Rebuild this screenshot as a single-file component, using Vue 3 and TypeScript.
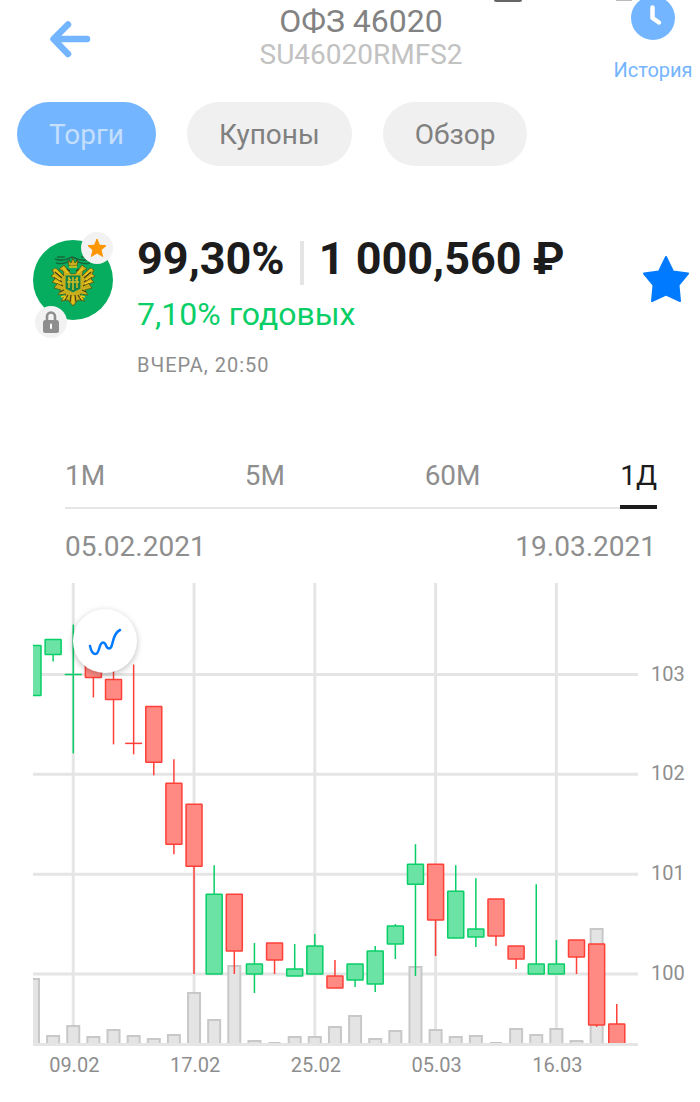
<script setup lang="ts">
import { ref } from 'vue'

interface Candle {
  up: boolean
  top: number
  bottom: number
  high: number
  low: number
  volume: number
}

const sections = ['Торги', 'Купоны', 'Обзор']
const activeSection = ref('Торги')

const ranges = ['1М', '5М', '60М', '1Д']
const activeRange = ref('1Д')

// direction, body top, body bottom, high, low, volume
const rows: [number, number, number, number, number, number][] = [
  [1, 103.29, 102.79, 103.29, 102.79, 65],
  [1, 103.35, 103.2, 103.35, 103.13, 8],
  [1, 103, 103, 103.5, 102.21, 18],
  [0, 103.15, 102.97, 103.15, 102.77, 7],
  [0, 102.95, 102.75, 103.1, 102.3, 14],
  [0, 102.31, 102.31, 103.1, 102.2, 8],
  [0, 102.68, 102.12, 102.68, 101.99, 5],
  [0, 101.91, 101.3, 102.15, 101.2, 9],
  [0, 101.7, 101.08, 101.7, 100, 51],
  [1, 100.8, 100, 101.09, 100, 24],
  [0, 100.8, 100.23, 100.8, 100, 78],
  [1, 100.1, 100, 100.31, 99.81, 3],
  [0, 100.31, 100.14, 100.31, 100, 1],
  [1, 100.05, 99.98, 100.3, 99.98, 7],
  [1, 100.28, 100, 100.4, 100, 7],
  [0, 99.98, 99.86, 100.14, 99.86, 17],
  [1, 100.1, 99.94, 100.1, 99.87, 28],
  [1, 100.23, 99.9, 100.28, 99.82, 5],
  [1, 100.48, 100.3, 100.5, 100.15, 13],
  [1, 101.1, 100.9, 101.3, 99.98, 77],
  [0, 101.1, 100.54, 101.1, 100.18, 14],
  [1, 100.83, 100.36, 101.09, 100.36, 7],
  [1, 100.45, 100.37, 100.96, 100.27, 8],
  [0, 100.75, 100.38, 100.75, 100.28, 1],
  [0, 100.28, 100.15, 100.28, 100.05, 15],
  [1, 100.1, 100, 100.9, 100, 9],
  [1, 100.1, 100, 100.34, 100, 15],
  [0, 100.34, 100.17, 100.34, 100, 3],
  [0, 100.3, 99.49, 100.3, 99.47, 115],
  [0, 99.5, 99.2, 99.7, 99.2, 0],
]
const candles: Candle[] = rows.map(([dir, top, bottom, high, low, volume]) => ({
  up: dir === 1, top, bottom, high, low, volume,
}))

const plot = { left: 33, right: 638, base: 460, step: 20.13 }
const x = (i: number) => plot.left + i * plot.step
const y = (price: number) => 91.5 + (103 - price) * 99.83

const priceTicks = [103, 102, 101, 100]
const dateTicks = [
  { i: 2, label: '09.02' },
  { i: 8, label: '17.02' },
  { i: 14, label: '25.02' },
  { i: 20, label: '05.03' },
  { i: 26, label: '16.03' },
]

function volumePath(i: number, v: number): string {
  const top = plot.base - v + 1
  return `M${x(i) - 6} ${plot.base}V${top}H${x(i) + 6}V${plot.base}`
}
</script>

<template>
  <main class="page">
    <header class="header">
      <span class="notch dark"></span>
      <span class="notch light"></span>
      <button class="back" type="button" aria-label="Назад">
        <svg width="42" height="38" viewBox="0 0 42 38" fill="none" stroke="#74b5ff" stroke-width="6.5" stroke-linecap="round" stroke-linejoin="round">
          <path d="M38 19H5M19 4.500L4.500 19L19 34" />
        </svg>
      </button>
      <div class="heading">
        <h1>ОФЗ 46020</h1>
        <p>SU46020RMFS2</p>
      </div>
      <a class="history" href="#history">
        <svg width="44" height="44" viewBox="0 0 44 44">
          <circle cx="22" cy="22" r="22" fill="#74b5ff" />
          <path d="M21.500 11.500V22L28 26.500" fill="none" stroke="#fff" stroke-width="4.500" stroke-linecap="round" stroke-linejoin="round" />
        </svg>
        <span>История</span>
      </a>
    </header>

    <nav class="sections">
      <button
        v-for="s in sections" :key="s" type="button" class="pill"
        :class="{ active: s === activeSection }" @click="activeSection = s"
      >{{ s }}</button>
    </nav>

    <section class="quote">
      <div class="logo">
        <svg class="emblem" width="80" height="80" viewBox="0 0 80 80">
          <circle cx="40" cy="40" r="40" fill="#07ad5e" />
          <g fill="none" stroke="#17683c" stroke-width="1.600">
            <path d="M22 19Q30 22 39 17Q49 22 58 19M23 23Q32 25 37 20M57 23Q48 25 43 20M24 17L32 17M48 17L56 17" />
          </g>
          <g fill="#c9ae1c" stroke="#4d5a16" stroke-width="0.800">
            <path d="M36 26L35 20L38 23L40 18L42 23L45 20L44 26Z" />
            <path d="M38 34L31 25L26 29L30 31L31 36L23 28L19 30L21 34L18 36L22 39L19 42L24 44L21 48L28 50L25 55L33 54L28 61L35 60L40 66L45 60L52 61L47 54L55 55L52 50L59 48L56 44L61 42L58 39L62 36L59 34L61 30L57 28L49 36L50 31L54 29L49 25L42 34Z" />
          </g>
          <g fill="none" stroke="#463f16" stroke-width="1.200">
            <path d="M22 32L29 38M21 37L29 42M24 43L30 46M58 32L51 38M59 37L51 42M56 43L50 46M34 29L37 31M46 29L43 31M35 55L32 60M38 55L37 62M42 55L43 62M45 55L48 60M27 52L31 50M53 52L49 50" />
          </g>
          <g fill="none" stroke="#f0c818" stroke-width="1.400">
            <path d="M21 29L28 35M20 35L27 40M22 41L28 44M59 29L52 35M60 35L53 40M58 41L52 44M36 27H44M30 28L35 33M50 28L45 33M33 57L30 59M40 56V64M47 57L50 59M28 57L32 56M52 57L48 56" />
          </g>
          <path d="M32 35H48V49L40 53L32 49Z" fill="#128448" stroke="#c8b020" stroke-width="1.200" />
          <path d="M36 37V48M40 37V50M44 37V48M34 42H46M35 38L38 40M42 40L45 38" fill="none" stroke="#d5bd22" stroke-width="1.500" />
        </svg>
        <span class="badge fav">
          <svg width="20" height="20" viewBox="0 0 20 20" fill="#ff9500" stroke="#ff9500" stroke-linejoin="round">
            <path d="M10 1L12.500 7.200L19 7.700L14 12L15.700 18.500L10 15L4.300 18.500L6 12L1 7.700L7.500 7.200Z" />
          </svg>
        </span>
        <span class="badge lock">
          <svg width="16" height="22" viewBox="0 0 16 22">
            <path d="M4 11V5.500A4 4 0 0 1 12 5.500V11" fill="none" stroke="#8e8e8e" stroke-width="2.600" />
            <rect x="0" y="9" width="16" height="13" rx="2.500" fill="#8e8e8e" />
            <rect x="7" y="12.500" width="2" height="5.500" rx="1" fill="#fff" />
          </svg>
        </span>
      </div>
      <div class="figures">
        <div class="price">
          <strong>99,30%</strong>
          <i class="bar"></i>
          <strong>1 000,560 ₽</strong>
        </div>
        <p class="yield">7,10% годовых</p>
        <p class="time">ВЧЕРА, 20:50</p>
      </div>
      <button class="star" type="button" aria-label="В избранное">
        <svg width="48" height="48" viewBox="0 0 48 48" fill="#007aff" stroke="#007aff" stroke-width="2" stroke-linejoin="round">
          <path d="M24 2L31 16.500L46 18.500L36.500 30L38 46L24 39.500L10 46L11.500 30L2 18.500L17 16.500Z" />
        </svg>
      </button>
    </section>

    <section class="period">
      <div class="ranges">
        <button
          v-for="r in ranges" :key="r" type="button"
          :class="{ active: r === activeRange }" @click="activeRange = r"
        >{{ r }}</button>
      </div>
      <div class="dates">
        <time datetime="2021-02-05">05.02.2021</time>
        <time datetime="2021-03-19">19.03.2021</time>
      </div>
    </section>

    <section class="chart">
      <svg class="plot" viewBox="0 0 700 519" role="img" aria-label="График котировок">
        <defs>
          <clipPath id="area"><rect x="33" y="0" width="605" height="460" /></clipPath>
        </defs>
        <g stroke="#e5e5e5" stroke-width="3">
          <line v-for="p in priceTicks" :key="p" :x1="plot.left" :x2="plot.right" :y1="y(p)" :y2="y(p)" />
          <line v-for="d in dateTicks" :key="d.i" :x1="x(d.i)" :x2="x(d.i)" y1="0" :y2="plot.base" />
          <line :x1="plot.left" :x2="plot.right" y1="461.500" y2="461.500" />
        </g>
        <g clip-path="url(#area)">
          <template v-for="(c, i) in candles" :key="i">
            <path v-if="c.volume > 0" class="volume" :d="volumePath(i, c.volume)" />
          </template>
          <g v-for="(c, i) in candles" :key="i" :class="c.up ? 'up' : 'down'">
            <line :x1="x(i)" :x2="x(i)" :y1="y(c.high)" :y2="y(c.top)" />
            <line :x1="x(i)" :x2="x(i)" :y1="y(c.bottom)" :y2="y(c.low)" />
            <rect v-if="c.top > c.bottom" :x="x(i) - 8" :y="y(c.top)" width="16" :height="y(c.bottom) - y(c.top)" rx="0.500" />
            <line v-else :x1="x(i) - 8.500" :x2="x(i) + 8.500" :y1="y(c.top)" :y2="y(c.top)" />
          </g>
        </g>
        <g class="axis">
          <text v-for="p in priceTicks" :key="p" x="651" :y="y(p) + 6">{{ p }}</text>
          <text v-for="d in dateTicks" :key="d.i" :x="x(d.i) + 1" y="489" text-anchor="middle">{{ d.label }}</text>
        </g>
      </svg>
      <button class="mode" type="button" aria-label="Вид графика">
        <svg width="34" height="30" viewBox="0 0 34 30" fill="none" stroke="#007aff" stroke-width="2.500" stroke-linecap="round">
          <path d="M2 20C3 25 4.500 28 7.500 28C12 28 10.500 16.500 15 16.500C18.500 16.500 17.500 22.500 21 22.500C26 22.500 23 8 32 4" />
        </svg>
      </button>
    </section>
  </main>
</template>

<style>
body {
  margin: 0;
  background: #fff;
}
</style>

<style scoped>
.page {
  font-family: Roboto, "Noto Sans", sans-serif;
  color: #1c1c1c;
  overflow: hidden;
}
h1, p {
  margin: 0;
  font-weight: 400;
}
button {
  border: 0;
  padding: 0;
  background: none;
  font: inherit;
  color: inherit;
  cursor: pointer;
}
svg {
  display: block;
}
.header {
  position: relative;
  display: grid;
  grid-template-columns: 108px 1fr 86px;
  height: 102px;
}
.notch {
  position: absolute;
  top: 0;
}
.notch.dark {
  right: 178px;
  width: 28px;
  height: 2px;
  border-radius: 0 0 2px 2px;
  background: #666;
}
.notch.light {
  right: 68px;
  width: 16px;
  height: 1px;
  background: #bbb;
}
.back {
  align-self: start;
  justify-self: start;
  padding: 20px 16px 20px 49px;
}
.heading {
  text-align: center;
}
.heading h1 {
  margin-top: 2px;
  font-size: 32px;
  line-height: 38px;
  color: #828282;
}
.heading p {
  font-size: 28px;
  line-height: 30px;
  color: #c2c2c2;
}
.history {
  display: flex;
  flex-direction: column;
  align-items: center;
  gap: 18px;
  margin: -4px 8px 0 0;
  font-size: 20px;
  line-height: 24px;
  color: #74b5ff;
  text-decoration: none;
}
.sections {
  display: flex;
  gap: 31px;
  padding: 0 17px;
}
.pill {
  height: 64px;
  padding: 0 32px;
  border-radius: 32px;
  background: #f0f0f0;
  font-size: 28px;
  color: #808080;
}
.pill.active {
  background: #74b5ff;
  color: #c4dffc;
}
.quote {
  display: flex;
  gap: 24px;
  padding: 66px 10px 0 33px;
}
.logo {
  position: relative;
  width: 80px;
  height: 80px;
  margin-top: 8px;
}
.badge {
  position: absolute;
  display: grid;
  place-items: center;
  width: 32px;
  height: 32px;
  border-radius: 50%;
  background: #f2f2f2;
}
.fav {
  top: -8px;
  left: 48px;
}
.lock {
  top: 66px;
  left: 2px;
}
.figures {
  flex: 1;
}
.price {
  display: flex;
  align-items: center;
  gap: 15px;
  font-size: 45px;
  line-height: 54px;
}
.price strong {
  font-weight: 700;
  white-space: nowrap;
}
.bar {
  width: 4px;
  height: 44px;
  margin-top: 8px;
  background: #e5e5e5;
}
.yield {
  margin-top: 8px;
  font-size: 32px;
  line-height: 40px;
  color: #0ace66;
}
.time {
  margin-top: 19px;
  font-size: 20px;
  line-height: 24px;
  letter-spacing: 1px;
  color: #8e8e8e;
}
.star {
  align-self: flex-start;
  margin-top: 23px;
}
.period {
  margin: 78px 43px 0 65px;
  font-size: 28px;
  color: #8e8e8e;
}
.ranges {
  display: flex;
  justify-content: space-between;
  box-shadow: inset 0 -2px #e5e5e5;
}
.ranges button {
  height: 54px;
  padding-bottom: 13px;
}
.ranges .active {
  color: #1c1c1c;
  box-shadow: inset 0 -4px #1c1c1c;
}
.dates {
  display: flex;
  justify-content: space-between;
  padding: 20px 1px 0 0;
  line-height: 36px;
}
.chart {
  position: relative;
  margin-top: 18px;
}
.plot {
  width: 100%;
  height: auto;
}
.volume {
  fill: #e4e4e4;
  stroke: #c8c8c8;
  stroke-width: 2;
}
.up {
  stroke: #08ce67;
  stroke-width: 1.5px;
  fill: #6be3a4;
}
.down {
  stroke: #ff4038;
  stroke-width: 1.5px;
  fill: #ff8a84;
}
.axis {
  font-size: 20px;
  fill: #8e8e8e;
}
.mode {
  position: absolute;
  top: 26px;
  left: 73px;
  display: grid;
  place-items: center;
  width: 64px;
  height: 64px;
  border-radius: 50%;
  background: #fff;
  box-shadow: 0 2px 6px rgba(0, 0, 0, 0.25);
}
</style>
